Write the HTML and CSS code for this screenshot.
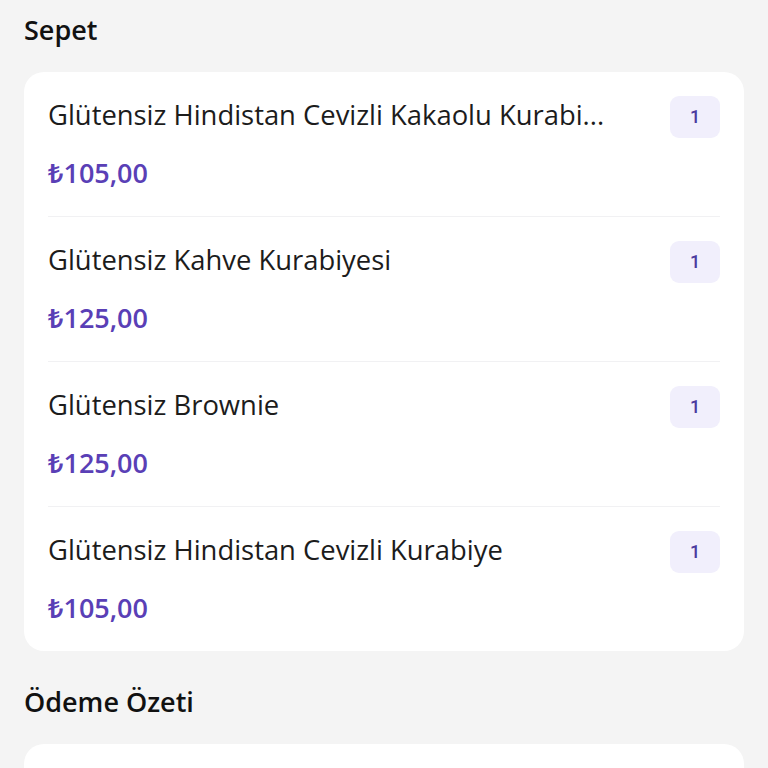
FILE: index.html
```html
<!DOCTYPE html>
<html lang="tr">
<head>
  <meta charset="UTF-8">
  <meta name="viewport" content="width=device-width, initial-scale=1.0">
  <title>Sepet</title>
  <link rel="stylesheet" href="styles.css">
</head>
<body>

<section class="section">
  <h2>Sepet</h2>
  <div class="card">
    <div class="cart-item">
      <div class="item-info">
        <div class="item-name">Glütensiz Hindistan Cevizli Kakaolu Kurabi...</div>
        <div class="item-price">₺105,00</div>
      </div>
      <span class="qty">1</span>
    </div>
    <div class="cart-item">
      <div class="item-info">
        <div class="item-name">Glütensiz Kahve Kurabiyesi</div>
        <div class="item-price">₺125,00</div>
      </div>
      <span class="qty">1</span>
    </div>
    <div class="cart-item">
      <div class="item-info">
        <div class="item-name">Glütensiz Brownie</div>
        <div class="item-price">₺125,00</div>
      </div>
      <span class="qty">1</span>
    </div>
    <div class="cart-item">
      <div class="item-info">
        <div class="item-name">Glütensiz Hindistan Cevizli Kurabiye</div>
        <div class="item-price">₺105,00</div>
      </div>
      <span class="qty">1</span>
    </div>
  </div>
</section>

<section class="section">
  <h2>Ödeme Özeti</h2>
  <div class="card summary"></div>
</section>

</body>
</html>
```

FILE: styles.css
```css
body {
  font-family: "Open Sans", "Noto Sans", sans-serif;
  background-color: #f4f4f4;
  margin: 0;
  padding: 14px 24px;
  color: #1c1c1c;
}

.section {
  margin-bottom: 35px;
}

h2 {
  font-size: 27px;
  font-weight: 600;
  line-height: 32px;
  margin: 0 0 26px;
  color: #111;
}

.card {
  background-color: white;
  border-radius: 20px;
  padding: 0 24px;
}

.summary {
  height: 200px;
}

.cart-item {
  display: flex;
  align-items: flex-start;
  gap: 48px;
  padding: 24px 0 25px;
  border-bottom: 1px solid #f1f1f3;
}

.cart-item:last-child {
  border-bottom: none;
}

.item-info {
  flex: 1;
  min-width: 0;
}

.item-name {
  font-size: 27.4px;
  line-height: 38px;
  white-space: nowrap;
  overflow: hidden;
  text-overflow: ellipsis;
}

.item-price {
  margin-top: 21px;
  font-size: 27px;
  line-height: 36px;
  font-weight: 600;
  color: #5a3fb6;
}

.qty {
  width: 50px;
  height: 42px;
  line-height: 42px;
  text-align: center;
  border-radius: 9px;
  background-color: #f1effc;
  color: #4b3a9e;
  font-family: Roboto, sans-serif;
  font-weight: 500;
  font-size: 18px;
}
```
